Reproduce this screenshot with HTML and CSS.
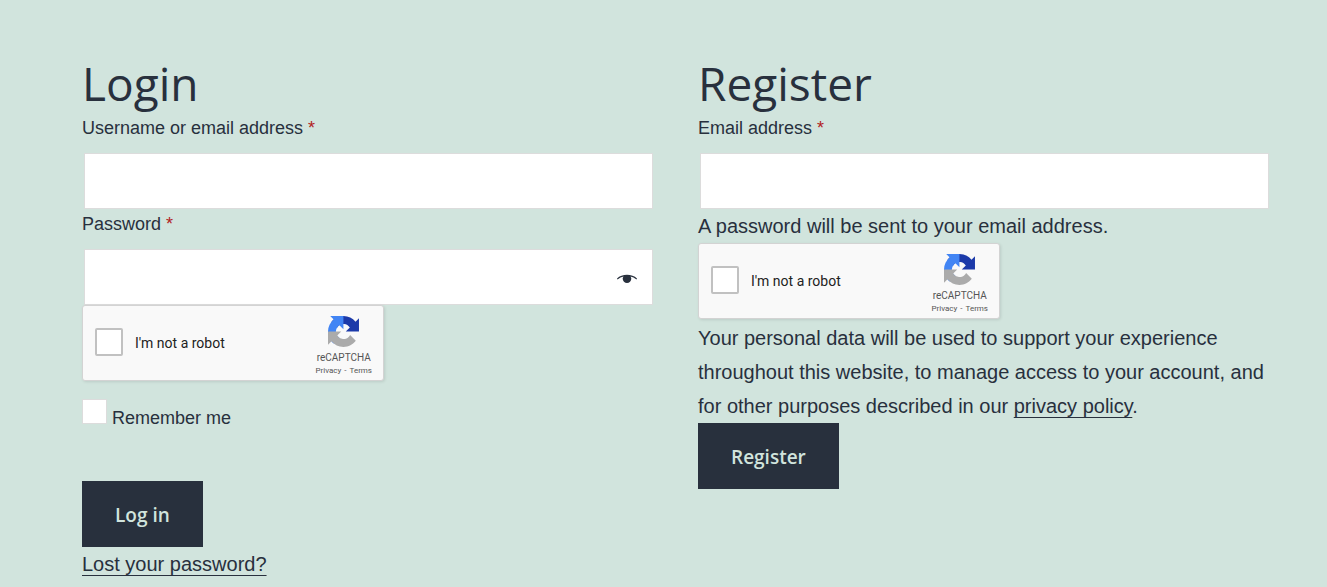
FILE: index.html
```
<!DOCTYPE html>
<html lang="en">
<head>
<meta charset="utf-8">
<meta name="viewport" content="width=device-width, initial-scale=1">
<title>My account</title>
<link rel="stylesheet" href="styles.css">
</head>
<body>
<svg class="sprite" aria-hidden="true">
  <symbol id="recaptcha" viewBox="0 0 64 64">
    <path fill="#1c3aa9" d="M64 31.955a33.3 33.3 0 0 0-.035-1.373V4.687l-7.16 7.16C50.947 4.674 42.033.093 32.05.093c-10.4 0-19.622 4.96-25.458 12.64l11.736 11.86a15.55 15.55 0 0 1 4.754-5.334c2.05-1.6 4.952-2.906 8.968-2.906.485 0 .86.057 1.135.163 4.976.393 9.288 3.14 11.828 7.124l-8.307 8.307L64 31.953"/>
    <path fill="#4285f4" d="M31.862.094a33.3 33.3 0 0 0-1.373.035H4.594l7.16 7.16C4.58 13.147 0 22.06 0 32.046c0 10.4 4.96 19.622 12.64 25.458L24.5 45.768a15.55 15.55 0 0 1-5.334-4.754c-1.6-2.05-2.906-4.952-2.906-8.968 0-.485.057-.86.163-1.135.393-4.976 3.14-9.288 7.124-11.828l8.307 8.307L31.86.095"/>
    <path fill="#ababab" d="M.001 32.045a33.3 33.3 0 0 0 .035 1.373v25.895l7.16-7.16c5.86 7.173 14.774 11.754 24.76 11.754 10.4 0 19.622-4.96 25.458-12.64l-11.736-11.86a15.55 15.55 0 0 1-4.754 5.334c-2.05 1.6-4.952 2.906-8.968 2.906-.485 0-.86-.057-1.135-.163-4.976-.393-9.288-3.14-11.828-7.124l8.307-8.307c-10.522.04-22.4.066-27.295-.005"/>
  </symbol>
</svg>
<main class="account">
  <section class="column">
    <h2 class="title">Login</h2>
    <form class="form">
      <label class="label" for="username">Username or email address <span class="required">*</span></label>
      <input class="field" type="text" id="username">
      <label class="label" for="password">Password <span class="required">*</span></label>
      <div class="password">
        <input class="field" type="password" id="password">
        <button class="reveal" type="button" aria-label="Show password">
          <svg class="eye" viewBox="0 0 20 10"><path d="M0 4.500C5-.5 15-.5 20 4.500l-.5 1c-2-1.500-4-2.600-6-3 .6 1 .8 1.500.8 2.300a4.300 4.200 0 0 1-8.600 0c0-.8.200-1.300.8-2.300-2 .4-4 1.500-6 3z"/></svg>
        </button>
      </div>
      <div class="captcha">
        <input class="captcha-check" type="checkbox" id="robot-login">
        <label class="captcha-label" for="robot-login">I'm not a robot</label>
        <div class="captcha-brand">
          <svg class="captcha-logo" aria-hidden="true"><use href="#recaptcha"/></svg>
          <span class="captcha-name">reCAPTCHA</span>
          <span class="captcha-links"><a href="#">Privacy</a><span>-</span><a href="#">Terms</a></span>
        </div>
      </div>
      <div class="remember">
        <input class="check" type="checkbox" id="remember">
        <label class="remember-label" for="remember">Remember me</label>
      </div>
      <button class="button" type="submit">Log in</button>
      <p class="text"><a class="link" href="#">Lost your password?</a></p>
    </form>
  </section>
  <section class="column">
    <h2 class="title">Register</h2>
    <form class="form">
      <label class="label" for="email">Email address <span class="required">*</span></label>
      <input class="field" type="email" id="email">
      <p class="text">A password will be sent to your email address.</p>
      <div class="captcha">
        <input class="captcha-check" type="checkbox" id="robot-register">
        <label class="captcha-label" for="robot-register">I'm not a robot</label>
        <div class="captcha-brand">
          <svg class="captcha-logo" aria-hidden="true"><use href="#recaptcha"/></svg>
          <span class="captcha-name">reCAPTCHA</span>
          <span class="captcha-links"><a href="#">Privacy</a><span>-</span><a href="#">Terms</a></span>
        </div>
      </div>
      <p class="text">Your personal data will be used to support your experience throughout this website, to manage access to your account, and for other purposes described in our <a class="link" href="#">privacy policy</a>.</p>
      <button class="button" type="submit">Register</button>
    </form>
  </section>
</main>
</body>
</html>
```
FILE: styles.css
```
* { box-sizing: border-box; }

body {
  margin: 0;
  background: #d1e4dd;
  color: #28303d;
  font-family: "Liberation Sans", Arial, sans-serif;
  font-size: 20px;
  line-height: 34px;
}

.sprite { display: none; }

.account {
  display: grid;
  grid-template-columns: 1fr 1fr;
  gap: 43px;
  padding: 54px 56px 0 82px;
}

.title {
  margin: 0;
  font: 400 46px/59px "Segoe UI", "Open Sans", sans-serif;
}

.form {
  display: flex;
  flex-direction: column;
  align-items: flex-start;
}

.label {
  margin-bottom: 9px;
  font-size: 18px;
  line-height: 31px;
}

.required { color: #b22222; }

.field {
  display: block;
  align-self: stretch;
  height: 56px;
  margin: 0 2px;
  padding: 10px;
  border: 1px solid #dcdcdc;
  border-radius: 0;
  background: #fff;
  color: inherit;
  font: inherit;
}

.password {
  display: grid;
  align-self: stretch;
  align-items: center;
}

.password .field,
.reveal { grid-area: 1 / 1; }

.password .field { padding-right: 56px; }

.reveal {
  justify-self: end;
  display: flex;
  margin-right: 18px;
  padding: 3px 0 0;
  border: 0;
  background: none;
}

.eye {
  width: 20px;
  height: 10px;
  fill: #28303d;
}

.captcha {
  display: flex;
  align-items: center;
  width: 302px;
  height: 76px;
  margin-bottom: 2px;
  padding: 0 11px 0 12px;
  border: 1px solid #d3d3d3;
  border-radius: 3px;
  background: #f9f9f9;
  box-shadow: 1px 1px 3px rgba(0, 0, 0, 0.1);
  color: #222;
  font-family: Roboto, sans-serif;
}

.captcha-check {
  appearance: none;
  width: 28px;
  height: 28px;
  margin: 0 12px 2px 0;
  border: 2px solid #c1c1c1;
  border-radius: 2px;
  background: #fff;
}

.captcha-label {
  font-size: 14px;
  line-height: 17px;
}

.captcha-brand {
  display: flex;
  flex-direction: column;
  align-items: center;
  margin-left: auto;
  color: #555;
}

.captcha-logo {
  width: 31px;
  height: 31px;
  margin-top: 7px;
}

.captcha-name {
  margin-top: 5px;
  font-size: 10px;
  line-height: 12px;
}

.captcha-links {
  display: flex;
  gap: 3px;
  font-size: 8px;
  line-height: 14px;
}

.captcha-links a {
  color: inherit;
  text-decoration: none;
}

.remember {
  display: flex;
  align-items: flex-start;
  gap: 5px;
  margin: 16px 0 47px;
}

.check {
  appearance: none;
  width: 25px;
  height: 25px;
  margin: 0;
  border: 1px solid #dcdcdc;
  background: #fff;
}

.remember-label {
  padding-top: 4px;
  font-size: 18px;
  line-height: 31px;
}

.button {
  padding: 17px 33px 15px;
  border: 0;
  background: #28303d;
  color: #d1e4dd;
  font: 600 19px/34px "Segoe UI", "Open Sans", sans-serif;
}

.text { margin: 0; }

.link {
  color: inherit;
  text-decoration: underline 1px;
  text-underline-offset: 4px;
  text-decoration-skip-ink: none;
}
```
